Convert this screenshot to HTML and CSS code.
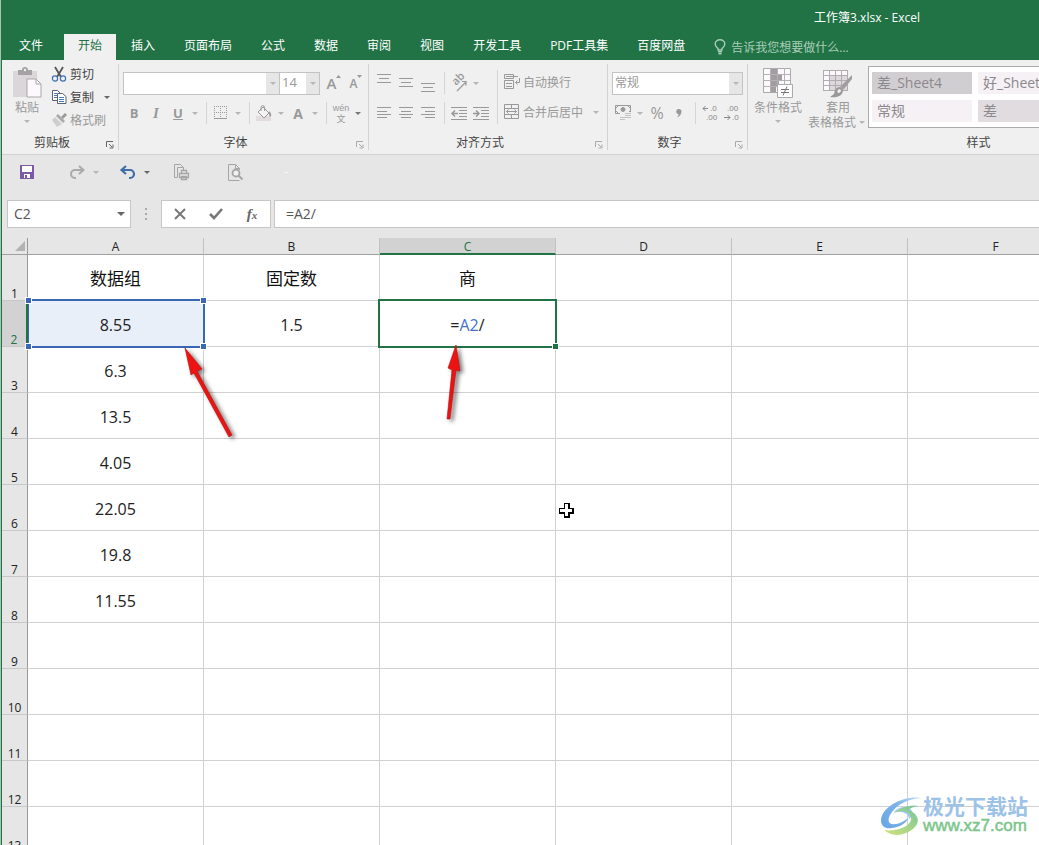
FILE: index.html
```html
<!DOCTYPE html>
<html lang="zh-CN">
<head>
<meta charset="utf-8">
<title>工作簿3.xlsx - Excel</title>
<link rel="stylesheet" href="styles.css">
</head>
<body>
<div class="app">
  <header class="titlebar"><h1>工作簿3.xlsx - Excel</h1></header>
  <nav class="tabs">
    <button class="tab">文件</button>
    <button class="tab active">开始</button>
    <button class="tab">插入</button>
    <button class="tab">页面布局</button>
    <button class="tab">公式</button>
    <button class="tab">数据</button>
    <button class="tab">审阅</button>
    <button class="tab">视图</button>
    <button class="tab">开发工具</button>
    <button class="tab">PDF工具集</button>
    <button class="tab">百度网盘</button>
    <button class="tell">
      <svg width="12" height="16" viewBox="0 0 12 16" fill="none" stroke="currentColor" stroke-width="1.4"><path d="M4 11V9.5C3 8.500 1.200 7.500 1.200 5a4.800 4.300 0 0 1 9.600 0c0 2.500-1.800 3.500-2.800 4.500V11zM4 12.800h4M4.500 14.700h3"/></svg>
      告诉我您想要做什么...
    </button>
  </nav>

  <section class="ribbon">
    <div class="group clipboard">
      <div class="body">
        <button class="big off">
          <svg width="30" height="32" viewBox="0 0 30 32"><path d="M1 4h24v26H1z" fill="#dad6da"/><path d="M6 3h4a3 3 0 0 1 6 0h4v5H6z" fill="#a5a2a5"/><circle cx="13" cy="3" r="1.200" fill="#f0f0f0"/><path d="M15 12h9l5 5v13H15z" fill="#fbf9fb" stroke="#aaa7aa"/><path d="M24 12v5h5" fill="none" stroke="#aaa7aa"/></svg>
          <span>粘贴</span><i class="caret"></i>
        </button>
        <div class="stack">
          <button class="cmd">
            <svg width="16" height="16" viewBox="0 0 16 16" fill="none"><path d="M4 1l6 10M12 1L6 11" stroke="#555" stroke-width="1.800"/><circle cx="4" cy="12.500" r="2.600" stroke="#3f70ad" stroke-width="1.200"/><circle cx="12" cy="12.500" r="2.600" stroke="#3f70ad" stroke-width="1.200"/></svg>剪切</button>
          <button class="cmd">
            <svg width="16" height="16" viewBox="0 0 16 16" fill="#fff" stroke="#5c6470"><path d="M1.500 1.500h5l3 3v7h-8z"/><path d="M3 4.500h3M3 6.500h3M3 8.500h3" stroke="#4679b3"/><path d="M6.500 4.500h5l3.500 3v7H6.500z"/><path d="M8 8.500h5M8 10.500h5M8 12.500h5" stroke="#4679b3"/></svg>复制<i class="caret dark"></i></button>
          <button class="cmd off">
            <svg width="16" height="16" viewBox="0 0 16 16"><path d="M14 1l2 2-4 4-2-2z" fill="#999"/><path d="M5 4l2-2 7 7-2 2z" fill="#aaa"/><path d="M4 5l7 7-5 3-5-7z" fill="#d0cdd0"/></svg>格式刷</button>
        </div>
      </div>
      <footer><span>剪贴板</span><button class="launch dark" aria-label="剪贴板设置"><svg width="8" height="8" viewBox="0 0 8 8"><path d="M.500 6V.500H7M3 3l3 3M7 3.500V7H3.500" fill="none" stroke="currentColor"/></svg></button></footer>
    </div>

    <div class="group font">
      <div class="body col">
        <div class="row">
          <div class="combo family"><input type="text" aria-label="字体"><button aria-label="选择字体"><i class="caret"></i></button></div>
          <div class="combo size"><input type="text" aria-label="字号" value="14"><button aria-label="选择字号"><i class="caret"></i></button></div>
          <button class="ib grow"><b>A</b><svg width="5" height="4" viewBox="0 0 5 4"><path d="M0 3l2.500-3L5 3z" fill="#999"/></svg></button>
          <button class="ib grow small"><b>A</b><svg width="5" height="4" viewBox="0 0 5 4"><path d="M0 0h5L2.500 3z" fill="#999"/></svg></button>
        </div>
        <div class="row">
          <button class="ib"><b>B</b></button><button class="ib"><b class="it">I</b></button><button class="ib"><b class="un">U</b></button><i class="caret"></i>
          <i class="sep"></i>
          <button class="ib" aria-label="边框"><svg width="14" height="14" viewBox="0 0 14 14" fill="none" stroke="#999"><path d="M.500 0v13M6.500 0v13M12.500 0v13M0 .500h13M0 6.500h13" stroke-dasharray="1 1"/><path d="M0 12.500h13"/></svg></button><i class="caret"></i>
          <i class="sep"></i>
          <button class="ib" aria-label="填充颜色"><svg width="16" height="16" viewBox="0 0 16 16"><path d="M0 11h15v5H0z" fill="#e2dcdf"/><path d="M2 7l5-5 6 6-5 5zM5 6V2.500a1.800 1.800 0 0 1 3.600 0V6" fill="#f4f2f4" stroke="#999"/><path d="M13 6c3 3 2.500 5 1 6-1-1-1-3-1-6z" fill="#999"/></svg></button><i class="caret"></i>
          <button class="ib"><b class="lg">A</b></button><i class="caret"></i>
          <i class="sep"></i>
          <button class="ib wen"><span>wén</span><span>文</span></button><i class="caret mid"></i>
        </div>
      </div>
      <footer><span>字体</span><button class="launch" aria-label="字体设置"><svg width="8" height="8" viewBox="0 0 8 8"><path d="M.500 6V.500H7M3 3l3 3M7 3.500V7H3.500" fill="none" stroke="currentColor"/></svg></button></footer>
    </div>

    <div class="group align">
      <div class="body">
        <div class="col">
          <div class="row">
            <button class="ib" aria-label="顶端对齐"><svg width="14" height="18" viewBox="0 0 14 18" stroke="#999"><path d="M0 .500h14M2 4.500h10M0 8.500h14"/></svg></button>
            <button class="ib" aria-label="垂直居中"><svg width="14" height="18" viewBox="0 0 14 18" stroke="#999"><path d="M0 4.500h14M2 8.500h10M0 12.500h14"/></svg></button>
            <button class="ib" aria-label="底端对齐"><svg width="14" height="18" viewBox="0 0 14 18" stroke="#999"><path d="M0 9.500h14M2 13.500h10M0 17.500h14"/></svg></button>
            <i class="sep"></i>
            <button class="ib" aria-label="方向"><svg width="18" height="16" viewBox="0 0 18 16"><text x="0" y="0" transform="translate(6 11) rotate(-45)" class="ab">ab</text><path d="M7 16l9-9M12 6.500h4v4" fill="none" stroke="#999" stroke-width="1.200"/></svg></button><i class="caret"></i>
          </div>
          <div class="row">
            <button class="ib" aria-label="左对齐"><svg width="14" height="12" viewBox="0 0 14 12" stroke="#999"><path d="M0 .500h14M0 4.500h10M0 7.500h14M0 10.500h10"/></svg></button>
            <button class="ib" aria-label="居中"><svg width="14" height="12" viewBox="0 0 14 12" stroke="#999"><path d="M0 .500h14M2 4.500h10M0 7.500h14M2 10.500h10"/></svg></button>
            <button class="ib" aria-label="右对齐"><svg width="14" height="12" viewBox="0 0 14 12" stroke="#999"><path d="M0 .500h14M4 4.500h10M0 7.500h14M4 10.500h10"/></svg></button>
            <i class="sep"></i>
            <button class="ib" aria-label="减少缩进"><svg width="16" height="13" viewBox="0 0 16 13" stroke="#999" fill="none"><path d="M0 .500h16M8 3.500h8M8 6.500h8M8 9.500h8M0 12.500h16"/><path d="M1 6.500h6M4 3.500l-3 3 3 3" stroke-width="1.500"/></svg></button>
            <button class="ib" aria-label="增加缩进"><svg width="16" height="13" viewBox="0 0 16 13" stroke="#999" fill="none"><path d="M0 .500h16M8 3.500h8M8 6.500h8M8 9.500h8M0 12.500h16"/><path d="M0 6.500h6M3 3.500l3 3-3 3" stroke-width="1.500"/></svg></button>
          </div>
        </div>
        <i class="sep tall"></i>
        <div class="col wide">
          <div class="row"><button class="cmd off"><svg width="16" height="16" viewBox="0 0 16 16" fill="none" stroke="#999"><path d="M.500 .500h9v4h-9zM2 2.500h12M.500 6.500h9v8h-9zM2 9.500h6M2 12.500h6M15.500 4v4.500H12M13.500 6.500l-2 2 2 2"/></svg>自动换行</button></div>
          <div class="row"><button class="cmd off"><svg width="16" height="16" viewBox="0 0 16 16" fill="none" stroke="#999"><path d="M.500 .500h14v14H.500zM.500 4.500h14M.500 10.500h14M7.500 0v4M7.500 11v4M2.500 7.500h10M4.500 5.500l-2 2 2 2M10.500 5.500l2 2-2 2"/></svg>合并后居中<i class="caret"></i></button></div>
        </div>
      </div>
      <footer><span>对齐方式</span><button class="launch" aria-label="对齐设置"><svg width="8" height="8" viewBox="0 0 8 8"><path d="M.500 6V.500H7M3 3l3 3M7 3.500V7H3.500" fill="none" stroke="currentColor"/></svg></button></footer>
    </div>

    <div class="group number">
      <div class="body col">
        <div class="row"><div class="combo format"><select aria-label="数字格式"><option>常规</option></select><span class="drop"><i class="caret"></i></span></div></div>
        <div class="row">
          <button class="ib" aria-label="会计数字格式"><svg width="17" height="16" viewBox="0 0 17 16" fill="none" stroke="#999"><path d="M.500 .500h15v8H.500z"/><path d="M1 3l2-2M13 1l2 2M1 6l2 2M13 8l2-2"/><circle cx="8" cy="4.500" r="2" fill="#999"/><path d="M5 7h11v9H5z" fill="#f0f0f0" stroke="none"/><path d="M10 8.500h6M10 10.500h6M10 12.500h6M5 12.500h5M5 14.500h5" stroke="#c4c0c4"/></svg></button><i class="caret"></i>
          <button class="ib pct">%</button>
          <button class="ib" aria-label="千位分隔样式"><svg width="6" height="9" viewBox="0 0 6 9"><path d="M3 0a2.500 2.500 0 0 1 2.500 2.500C5.500 5 4 7.500 1 8.500c1.200-1.500 1.500-2.500 1.500-3.500A2.500 2.500 0 0 1 3 0z" fill="#999"/></svg></button>
          <i class="sep"></i>
          <button class="ib" aria-label="增加小数位数"><svg class="dec" width="16" height="16" viewBox="0 0 16 16"><path d="M1 3.500h5M3.500 1L1 3.500 3.500 6" fill="none" stroke="#888"/><text x="8" y="6">.0</text><text x="4" y="15">.00</text></svg></button>
          <button class="ib" aria-label="减少小数位数"><svg class="dec" width="16" height="16" viewBox="0 0 16 16"><text x="3" y="6">.00</text><path d="M0 12.500h6M3.500 10L6 12.500 3.500 15" fill="none" stroke="#888"/><text x="8" y="15">.0</text></svg></button>
        </div>
      </div>
      <footer><span>数字</span><button class="launch" aria-label="数字设置"><svg width="8" height="8" viewBox="0 0 8 8"><path d="M.500 6V.500H7M3 3l3 3M7 3.500V7H3.500" fill="none" stroke="currentColor"/></svg></button></footer>
    </div>

    <div class="group styles">
      <div class="body">
        <button class="big off">
          <svg width="32" height="32" viewBox="0 0 32 32"><path d="M1.500 1.500h27v24h-27z" fill="#fbf9fb" stroke="#aaa"/><path d="M9 2h6v6H9zM9 8h11v5H9zM9 13h8v6H9zM9 19h5v6H9z" fill="#a19da1"/><path d="M8.500 1v24M15.500 1v24M22.500 1v24M1 7.500h27M1 13.500h27M1 19.500h27" stroke="#b5b1b5" fill="none"/><path d="M15.500 17.500h15v13h-15z" fill="#fff" stroke="#aaa"/><path d="M19 22.500h8M19 25.500h8M25 19.500l-4 9" stroke="#777"/></svg>
          <span>条件格式</span><i class="caret"></i>
        </button>
        <button class="big off">
          <svg width="32" height="32" viewBox="0 0 32 32"><path d="M1.500 3.500h24v20h-24z" fill="#fbf9fb"/><path d="M8 8h17v15H8z" fill="#dcd8dc"/><path d="M1.500 3v21M7.500 3v21M13.500 3v21M19.500 3v21M25.500 3v21M1 3.500h25M1 8.500h25M1 13.500h25M1 18.500h25M1 23.500h25" stroke="#b0acb0" fill="none"/><path d="M30 8L18 20l3 3 9-11z" fill="#a09ca0"/><path d="M18 20c-5 0-5 4-6 7l-4 3c7 1 13-1 13-7z" fill="#999"/><path d="M17 22c-2 1-2 3-1 4 2 0 3-1 3-3z" fill="#eee"/></svg>
          <span>套用</span><span class="line">表格格式<i class="caret"></i></span>
        </button>
        <div class="gallery">
          <button class="g1">差_Sheet4</button><button class="g2">好_Sheet4</button><button class="g2">常规</button><button class="g3">差</button>
        </div>
      </div>
      <footer><span>样式</span></footer>
    </div>
  </section>

  <section class="qat">
    <button aria-label="保存"><svg width="16" height="16" viewBox="0 0 16 16"><path d="M1 1h14v14H1z" fill="#7d5aa6"/><path d="M3 2h10v6H3zM5 10h6v4H5z" fill="#fff"/><path d="M6 11h2v3H6z" fill="#7d5aa6"/></svg></button>
    <button class="redo" aria-label="恢复"><svg width="16" height="14" viewBox="0 0 16 14" fill="none" stroke="#aaa" stroke-width="2"><path d="M14 5H6a4 4 0 0 0 0 8h1M10 1l4.500 4-4.500 4"/></svg><i class="caret"></i></button>
    <button class="undo" aria-label="撤消"><svg width="16" height="14" viewBox="0 0 16 14" fill="none" stroke="#3f6ea8" stroke-width="2.200"><path d="M2 5h8a4 4 0 0 1 0 8H9M6 1L1.500 5 6 9"/></svg><i class="caret dark"></i></button>
    <button aria-label="快速打印"><svg width="17" height="17" viewBox="0 0 17 17" fill="none" stroke="#a5a5a5"><path d="M4.500 13.500h-3V.500h6l3 3V6M4.500 13V3.500h6"/><path d="M8.500 6.500h5v3h-5zM6.500 9.500h9v4h-9zM8.500 12.500h5v3h-5z" fill="#e6e6e6" stroke-width="1.300"/></svg></button>
    <button class="preview" aria-label="打印预览"><svg width="16" height="17" viewBox="0 0 16 17" fill="none" stroke="#a5a5a5"><path d="M11.500 16.500H.500V.500h7l4 4V6M7.500 .500v4h4"/><circle cx="8" cy="9" r="3.500" stroke-width="1.800" fill="#f0f0f0"/><path d="M10.500 11.500l4 4" stroke-width="2"/></svg></button>
    <span class="dash"></span>
  </section>

  <section class="fbar">
    <div class="name"><input type="text" aria-label="名称框" value="C2"><button aria-label="名称列表"><i class="caret dark"></i></button></div>
    <span class="dots"><i></i><i></i><i></i></span>
    <div class="fx">
      <button aria-label="取消"><svg width="12" height="12" viewBox="0 0 12 12" stroke="#777" stroke-width="2"><path d="M1 1l10 10M11 1L1 11"/></svg></button>
      <button aria-label="输入"><svg width="14" height="12" viewBox="0 0 14 12" fill="none" stroke="#777" stroke-width="2.600"><path d="M1 6l4 4 8-9"/></svg></button>
      <button class="fn">f<sub>x</sub></button>
    </div>
    <input class="formula" type="text" aria-label="编辑栏" value="=A2/">
  </section>

  <main class="sheet">
    <table>
      <colgroup><col class="rh"><col><col><col><col><col><col><col></colgroup>
      <thead><tr><th class="corner"><svg width="10" height="10" viewBox="0 0 10 10"><path d="M10 0v10H0z" fill="#b3b3b3"/></svg></th><th>A</th><th>B</th><th class="on">C</th><th>D</th><th>E</th><th>F</th><th></th></tr></thead>
      <tbody>
        <tr><th>1</th><td class="zh">数据组</td><td class="zh">固定数</td><td class="zh">商</td><td></td><td></td><td></td><td></td></tr>
        <tr><th class="on">2</th><td class="ref">8.55<i class="box"><i></i><i></i><i></i><i></i></i></td><td>1.5</td><td class="edit">=<span>A2</span>/<i class="box"><i></i></i></td><td></td><td></td><td></td><td></td></tr>
        <tr><th>3</th><td>6.3</td><td></td><td></td><td></td><td></td><td></td><td></td></tr>
        <tr><th>4</th><td>13.5</td><td></td><td></td><td></td><td></td><td></td><td></td></tr>
        <tr><th>5</th><td>4.05</td><td></td><td></td><td></td><td></td><td></td><td></td></tr>
        <tr><th>6</th><td>22.05</td><td></td><td></td><td></td><td></td><td></td><td></td></tr>
        <tr><th>7</th><td>19.8</td><td></td><td></td><td></td><td></td><td></td><td></td></tr>
        <tr><th>8</th><td>11.55</td><td></td><td></td><td></td><td></td><td></td><td></td></tr>
        <tr><th>9</th><td></td><td></td><td></td><td></td><td></td><td></td><td></td></tr>
        <tr><th>10</th><td></td><td></td><td></td><td></td><td></td><td></td><td></td></tr>
        <tr><th>11</th><td></td><td></td><td></td><td></td><td></td><td></td><td></td></tr>
        <tr><th>12</th><td></td><td></td><td></td><td></td><td></td><td></td><td></td></tr>
        <tr><th>13</th><td></td><td></td><td></td><td></td><td></td><td></td><td></td></tr>
      </tbody>
    </table>
    <svg class="arrow a1" width="60" height="100" viewBox="0 0 60 100"><path d="M5 2l17 21-5 2L52 89l-3 2L14 27l-3 2z" fill="#ee1210" stroke="#b01010" stroke-width=".600"/></svg>
    <svg class="arrow a2" width="30" height="85" viewBox="0 0 30 85"><path d="M15 2l4 26-4-1-6 49H6l5-49-4-2z" fill="#ee1210" stroke="#b01010" stroke-width=".600"/></svg>
    <svg class="cursor" width="15" height="15" viewBox="0 0 15 15"><path d="M5 0h6v5h4v6h-4v4H5v-4H0V5h5z" fill="#000"/><path d="M6 1h3v5h4v3H9v4H6V9H1V6h5z" fill="#fff"/></svg>
  </main>
  <aside class="mark">
    <svg width="42" height="40" viewBox="0 0 42 40"><defs><linearGradient id="sky" x1="0" y1="1" x2="1" y2="0"><stop offset="0" stop-color="#6aa6e6"/><stop offset=".6" stop-color="#7db4e8"/><stop offset="1" stop-color="#c3def5"/></linearGradient><linearGradient id="leaf" x1="0" y1="1" x2="1" y2="0"><stop offset="0" stop-color="#d3e27a"/><stop offset="1" stop-color="#72c59c"/></linearGradient></defs><path d="M41 2C25-1 2 10 1 24c0 7 5 9 11 8 8-1 15-5 16-10-5 4-11 7-16 6-5-1-4-7 0-12C18 8 28 3 41 2z" fill="url(#sky)"/><path d="M14 16c5-6 15-7 18-1 1 3 0 6-3 8 0-5-5-8-15-7z" fill="#9fc9ef"/><path d="M39 10c-10-2-20 2-26 8 7-5 17-4 18 4 1 8-14 14-27 12 7 6 15 6 22 3 9-4 14-10 11-16-2-4-5-6-9-7 3-2 7-4 11-4z" fill="url(#leaf)"/></svg>
    <div><strong>极光下载站</strong><span>www.xz7.com</span></div>
  </aside>
</div>
</body>
</html>
```
FILE: styles.css
```css
* { box-sizing: border-box; }
body { margin: 0; font-family: "Open Sans", "Noto Sans CJK SC", sans-serif; font-size: 12px; color: #444; }
button, input, select { font: inherit; color: inherit; border: 0; background: none; padding: 0; margin: 0; border-radius: 0; appearance: none; min-width: 0; outline: 0; }
svg { display: block; flex: none; overflow: visible; }
.app { position: relative; display: flex; flex-direction: column; height: 100vh; overflow: hidden; background: #e6e6e6; border-left: 1px solid #a6c4b1; box-shadow: inset 1px 0 #217346; padding-left: 1px; }

.titlebar { height: 34px; background: #217346; color: #fff; text-align: right; padding: 8px 119px 0 0; }
.titlebar h1 { margin: 0; font-size: 12px; font-weight: 400; line-height: 20px; white-space: nowrap; }
.tabs { display: flex; height: 26px; background: #217346; color: #fff; white-space: nowrap; overflow: hidden; padding-left: 3px; }
.tab { padding: 0 14px 2px; margin-right: 1px; line-height: 22px; }
.tab.active { background: #f0f0f0; color: #217346; margin: 0 1px 0 7px; }
.tab:first-child { margin-right: 0; }
.tell { display: flex; align-items: center; gap: 5px; margin-left: 14px; color: #a9cdb8; }

.ribbon { display: flex; height: 95px; padding: 4px 0; background: #f0f0f0; border-bottom: 1px solid #d2d2d2; white-space: nowrap; overflow: hidden; }
.group { display: flex; flex-direction: column; flex: none; height: 86px; border-right: 1px solid #d2d2d2; }
.clipboard { width: 117px; }
.font { width: 250px; }
.align { width: 239px; }
.number { width: 140px; }
.styles { width: 462px; }
.body { display: flex; flex: 1; }
.col { display: flex; flex-direction: column; gap: 6px; padding: 7px 0 0 4px; }
.row { display: flex; align-items: center; height: 24px; }
.group footer { display: flex; align-items: center; height: 14px; line-height: 14px; text-align: center; }
.group footer span { flex: 1; }
.launch { width: 16px; height: 12px; padding: 4px 4px 0; color: #aaa; }
.launch.dark { color: #666; }
.off, .ib { color: #999; }
.big { display: flex; flex-direction: column; align-items: center; line-height: 15px; padding-top: 3px; }
.big svg { margin-bottom: 1px; }
.clipboard .big { width: 40px; margin-left: 5px; }
.stack { display: flex; flex-direction: column; gap: 1px; }
.cmd { display: flex; align-items: center; gap: 3px; height: 22px; padding: 0 0 2px 4px; }
.caret { display: inline-flex; justify-content: center; width: 12px; flex: none; color: #b5b5b5; }
.caret::before { content: ""; border: 3px solid transparent; border-top-color: currentColor; border-bottom: 0; }
.caret.dark { color: #666; }
.caret.mid { color: #777; }
.cmd .caret { margin-left: 4px; }
.big > .caret { margin-top: 5px; }
.ib { display: flex; align-items: center; justify-content: center; width: 22px; height: 22px; flex: none; }
.ib b { font-size: 13px; font-weight: 700; }
.ib .it { font-family: "Liberation Serif", serif; font-style: italic; font-size: 15px; }
.ib .un { text-decoration: underline; }
.ib .lg { font-size: 14px; }
.grow { align-items: flex-start; margin-left: 3px; }
.grow svg { margin-top: 3px; }
.grow b { font-size: 15px; line-height: 22px; font-weight: 600; }
.grow.small { margin-left: 0; }
.grow.small b { font-size: 12px; line-height: 24px; }
.wen { flex-direction: column; font-family: "Noto Sans", "Noto Sans CJK SC", sans-serif; font-size: 9px; line-height: 11px; }
.wen span:first-child { font-family: "Liberation Sans", sans-serif; line-height: 10px; }
.pct { font-size: 16px; }
.sep { width: 1px; height: 22px; margin: 0 3px 0 5px; background: #d5d5d5; }
.sep.tall { height: 54px; margin: 6px 0 0 5px; }
.wide .caret { margin-left: 4px; }
.wide { padding-left: 2px; }
.ab { font-size: 11px; fill: #999; font-weight: 600; }
.dec { font-family: "Liberation Sans", sans-serif; font-size: 8px; fill: #888; }
.combo { display: flex; height: 23px; border: 1px solid #c3c3c3; background: #fff; color: #999; font-size: 13px; }
.combo input, .combo select { flex: 1; padding: 0 2px 2px; width: 0; }
.combo button, .drop { display: flex; align-items: center; justify-content: center; width: 13px; background: #e6e6e6; }
.family { width: 157px; }
.size { width: 41px; margin-left: -1px; }
.format { width: 131px; font-size: 12px; }

.styles .big { width: 60px; }
.line { display: flex; align-items: center; }
.gallery { display: grid; grid-template-columns: 100px 100px; grid-auto-rows: 22px; gap: 6px; width: 330px; height: 62px; margin: 2px 0 0; padding: 5px 3px; border: 1px solid #aaa; background: #fff; }
.gallery button { text-align: left; padding-left: 5px; font-size: 14px; line-height: 20px; color: #8c888c; }
.g1 { background: #d1ced1; }
.g2 { background: #f5f1f5; }
.g3 { background: #e0dce0; }

.qat { display: flex; align-items: center; height: 34px; padding-left: 17px; flex: none; }
.qat button { display: flex; align-items: center; gap: 5px; margin-right: 34px; }
.qat .redo { margin-right: 18px; }
.qat .undo { margin-right: 20px; }
.qat .preview { margin-left: 4px; }
.qat .dash { width: 4px; height: 1px; background: #f5f5f5; margin-left: 6px; }

.fbar { display: flex; height: 39px; padding: 11px 0 0 5px; flex: none; font-size: 14px; color: #555; }
.name, .fx { display: flex; align-items: center; height: 28px; border: 1px solid #c6c6c6; background: #fff; }
.name { width: 124px; }
.name input { flex: 1; padding: 0 0 2px 6px; }
.name button { display: flex; align-items: center; justify-content: center; width: 18px; }
.name .caret::before { border-width: 4px 4px 0; }
.dots { display: flex; flex-direction: column; align-items: center; justify-content: center; gap: 3px; width: 30px; height: 28px; }
.dots i { width: 2px; height: 2px; background: #aaa; }
.fx { width: 110px; }
.fx button { display: flex; align-items: center; justify-content: center; width: 36px; height: 26px; }
.fx .fn { font: italic 700 15px "Liberation Serif", serif; align-items: baseline; line-height: 26px; color: #666; }
.fn sub { font-size: 11px; line-height: 1; vertical-align: baseline; }
.formula { flex: 1; height: 28px; margin-left: 3px; padding: 0 0 2px 11px; background: #fff; border: 1px solid #c6c6c6; border-right: 0; }

.sheet { position: relative; flex: 1; margin-top: 10px; overflow: hidden; }
table { width: 1258px; table-layout: fixed; border-spacing: 0; background: #fff; color: #222; }
col { width: 176px; }
.rh { width: 26px; }
th, td { padding: 0; border-right: 1px solid #d0d0d0; border-bottom: 1px solid #d0d0d0; text-align: center; white-space: nowrap; }
th { font-size: 12px; font-weight: 400; background: #e6e6e6; line-height: 14px; }
thead th { height: 17px; padding-top: 2px; border-color: #a0a0a0; border-right-color: #c2c2c2; }
th.corner { border-right-color: #999; padding: 2px 2px 2px 13px; }
thead th.on { background: #d2d2d2; color: #217346; border-bottom: 2px solid #217346; line-height: 13px; }
tbody th { height: 46px; vertical-align: bottom; line-height: 12px; border-right-color: #999; border-bottom-color: #c8c8c8; }
tbody th.on { background: #d2d2d2; color: #217346; border-right: 2px solid #217346; }
td { font-size: 16px; line-height: 20px; padding-top: 2px; position: relative; }
td.zh { font-size: 17px; color: #111; }
.ref { background: #e9eff9; }
.edit span { color: #4472c4; }
.box { position: absolute; }
.ref .box { inset: -2px -2px -2px 0; border: 2px solid #3a67b5; border-left-width: 1px; z-index: 1; }
.ref .box i { position: absolute; width: 5px; height: 5px; background: #3a67b5; outline: 1px solid #fff; }
.ref .box i:nth-child(1) { left: -3px; top: -3px; }
.ref .box i:nth-child(2) { right: -3px; top: -3px; }
.ref .box i:nth-child(3) { left: -3px; bottom: -3px; }
.ref .box i:nth-child(4) { right: -3px; bottom: -3px; }
.edit .box { inset: -2px; border: 2px solid #217346; z-index: 1; }
.edit .box i { position: absolute; right: -3px; bottom: -3px; width: 5px; height: 5px; background: #217346; outline: 1px solid #fff; }
.arrow { position: absolute; z-index: 2; filter: drop-shadow(3px 2px 2px #0008); }
.a1 { left: 178px; top: 108px; }
.a2 { left: 439px; top: 105px; }
.cursor { position: absolute; left: 557px; top: 265px; z-index: 2; }

.mark { position: absolute; right: 11px; bottom: 8px; z-index: 3; display: flex; gap: 1px; align-items: center; }
.mark div { display: flex; flex-direction: column; }
.mark strong { font-family: "Noto Sans CJK SC", sans-serif; font-size: 21px; line-height: 20px; color: #9dc2e8; font-weight: 700; }
.mark span { font-family: "Liberation Sans", sans-serif; font-size: 17px; line-height: 22px; color: #7cc58c; font-weight: 400; -webkit-text-stroke: 0.5px #7cc58c; }
```
